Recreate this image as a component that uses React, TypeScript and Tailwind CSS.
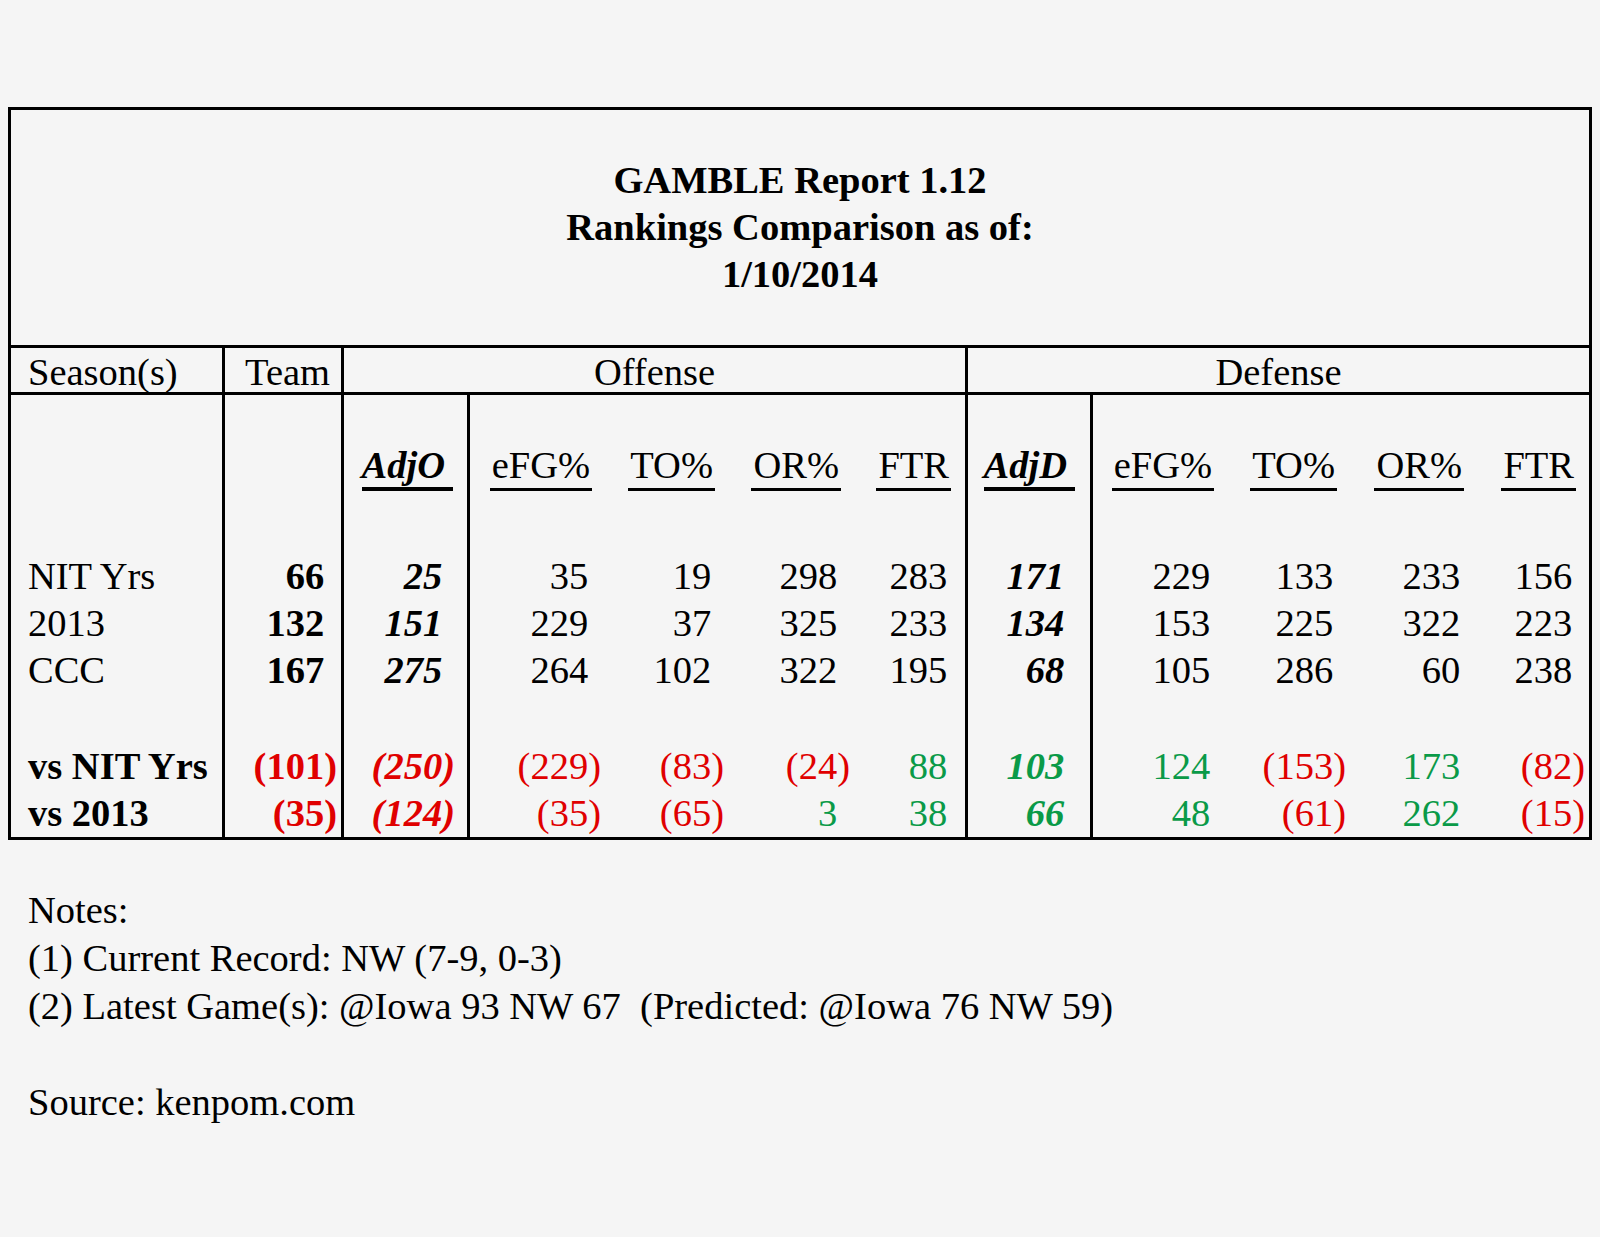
import React from "react";

type ColSpec = {
  w: string;
  border: boolean;
  pr: string;
  font: string;
  header: React.ReactNode;
  vals: number[];
};

const RED = "text-[#e00000]";
const GREEN = "text-[#0a9a48]";

function Num({ v, diff }: { v: number; diff: boolean }) {
  const color = diff ? (v < 0 ? RED : GREEN) : "";
  if (v < 0) {
    return <span className={color}>({Math.abs(v)})</span>;
  }
  return (
    <span className={color}>
      {v}
      <span className="invisible">)</span>
    </span>
  );
}

function Hdr({ children, bold }: { children: React.ReactNode; bold?: boolean }) {
  if (bold) {
    return (
      <span className="inline-block leading-[36px] pb-[4px] border-b-[4px] border-black pr-[8px] mr-[2px] font-bold italic">
        {children}
      </span>
    );
  }
  return (
    <span className="inline-block leading-[36px] pb-[5px] border-b-[3px] border-black px-[2px] mr-[9px]">
      {children}
    </span>
  );
}

const cols: ColSpec[] = [
  { w: "w-[119px]", border: true, pr: "pr-[4px]", font: "font-bold", header: null, vals: [66, 132, 167, -101, -35] },
  { w: "w-[126px]", border: true, pr: "pr-[12px]", font: "font-bold italic", header: <Hdr bold>AdjO</Hdr>, vals: [25, 151, 275, -250, -124] },
  { w: "w-[141px]", border: true, pr: "pr-[7px]", font: "", header: <Hdr>eFG%</Hdr>, vals: [35, 229, 264, -229, -35] },
  { w: "w-[123px]", border: false, pr: "pr-[7px]", font: "", header: <Hdr>TO%</Hdr>, vals: [19, 37, 102, -83, -65] },
  { w: "w-[126px]", border: false, pr: "pr-[7px]", font: "", header: <Hdr>OR%</Hdr>, vals: [298, 325, 322, -24, 3] },
  { w: "w-[108px]", border: false, pr: "pr-[5px]", font: "", header: <Hdr>FTR</Hdr>, vals: [283, 233, 195, 88, 38] },
  { w: "w-[125px]", border: true, pr: "pr-[13px]", font: "font-bold italic", header: <Hdr bold>AdjD</Hdr>, vals: [171, 134, 68, 103, 66] },
  { w: "w-[140px]", border: true, pr: "pr-[7px]", font: "", header: <Hdr>eFG%</Hdr>, vals: [229, 153, 105, 124, 48] },
  { w: "w-[123px]", border: false, pr: "pr-[7px]", font: "", header: <Hdr>TO%</Hdr>, vals: [133, 225, 286, -153, -61] },
  { w: "w-[127px]", border: false, pr: "pr-[7px]", font: "", header: <Hdr>OR%</Hdr>, vals: [233, 322, 60, 173, 262] },
  { w: "w-[109px]", border: false, pr: "pr-[4px]", font: "", header: <Hdr>FTR</Hdr>, vals: [156, 223, 238, -82, -15] },
];

function DataCol({ c }: { c: ColSpec }) {
  return (
    <div className={`${c.w} shrink-0 flex flex-col text-right ${c.pr} ${c.font} ${c.border ? "border-l-[3px] border-black" : ""}`}>
      <div className="h-[47px]" />
      <div className="h-[47px] leading-[47px] whitespace-nowrap">{c.header}</div>
      <div className="h-[64px]" />
      {c.vals.slice(0, 3).map((v, i) => (
        <div key={i} className="h-[47px] leading-[47px] whitespace-nowrap">
          <Num v={v} diff={false} />
        </div>
      ))}
      <div className="h-[49px]" />
      {c.vals.slice(3).map((v, i) => (
        <div key={i} className="h-[47px] leading-[47px] whitespace-nowrap">
          <Num v={v} diff={true} />
        </div>
      ))}
    </div>
  );
}

export default function App() {
  return (
    <div className="w-[1600px] h-[1237px] bg-[#f5f5f5] text-black font-['Liberation_Serif','Times_New_Roman',serif] text-[38.5px] overflow-hidden">
      <div className="pt-[107px] pl-[8px]">
        <div className="w-[1584px] border-[3px] border-black">
          {/* Title */}
          <div className="h-[238px] border-b-[3px] border-black flex flex-col items-center justify-center font-bold leading-[47px]">
            <div>GAMBLE Report 1.12</div>
            <div>Rankings Comparison as of:</div>
            <div>1/10/2014</div>
          </div>
          {/* Group header row */}
          <div className="h-[47px] border-b-[3px] border-black flex leading-[48px] whitespace-nowrap">
            <div className="w-[211px] shrink-0 pl-[17px]">Season(s)</div>
            <div className="w-[119px] shrink-0 border-l-[3px] border-black text-right pr-[11px]">Team</div>
            <div className="w-[624px] shrink-0 border-l-[3px] border-black text-center">Offense</div>
            <div className="w-[624px] shrink-0 border-l-[3px] border-black text-center">Defense</div>
          </div>
          {/* Body */}
          <div className="flex">
            <div className="w-[211px] shrink-0 flex flex-col pl-[17px] whitespace-nowrap">
              <div className="h-[47px]" />
              <div className="h-[47px]" />
              <div className="h-[64px]" />
              <div className="h-[47px] leading-[47px]">NIT Yrs</div>
              <div className="h-[47px] leading-[47px]">2013</div>
              <div className="h-[47px] leading-[47px]">CCC</div>
              <div className="h-[49px]" />
              <div className="h-[47px] leading-[47px] font-bold">vs NIT Yrs</div>
              <div className="h-[47px] leading-[47px] font-bold">vs 2013</div>
            </div>
            {cols.map((c, i) => (
              <DataCol key={i} c={c} />
            ))}
          </div>
        </div>
      </div>
      {/* Notes */}
      <div className="pl-[28px] pt-[46px] leading-[48px] whitespace-pre">
        <div>Notes:</div>
        <div>(1) Current Record: NW (7-9, 0-3)</div>
        <div>(2) Latest Game(s): @Iowa 93 NW 67  (Predicted: @Iowa 76 NW 59)</div>
        <div className="h-[48px]" />
        <div>Source: kenpom.com</div>
      </div>
    </div>
  );
}
